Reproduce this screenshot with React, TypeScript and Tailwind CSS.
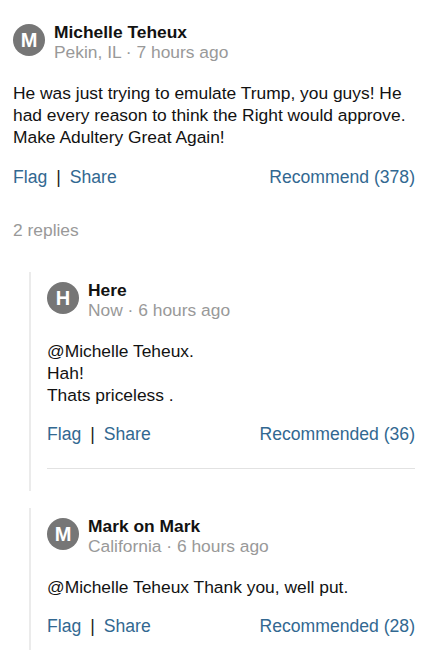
import React from "react";

type Comment = {
  initial: string;
  name: string;
  meta: string;
  body: string[];
  recommend: string;
};

const main: Comment = {
  initial: "M",
  name: "Michelle Teheux",
  meta: "Pekin, IL · 7 hours ago",
  body: [
    "He was just trying to emulate Trump, you guys! He had every reason to think the Right would approve. Make Adultery Great Again!",
  ],
  recommend: "Recommend (378)",
};

const replies: Comment[] = [
  {
    initial: "H",
    name: "Here",
    meta: "Now · 6 hours ago",
    body: ["@Michelle Teheux.", "Hah!", "Thats priceless ."],
    recommend: "Recommended (36)",
  },
  {
    initial: "M",
    name: "Mark on Mark",
    meta: "California · 6 hours ago",
    body: ["@Michelle Teheux Thank you, well put."],
    recommend: "Recommended (28)",
  },
];

function Header({ c }: { c: Comment }) {
  return (
    <div className="flex items-start gap-[9px]">
      <div className="mt-[2px] flex h-[32px] w-[32px] shrink-0 items-center justify-center rounded-full bg-[#767676] text-[20px] font-bold text-white">
        {c.initial}
      </div>
      <div className="leading-[20px]">
        <div className="font-bold text-[#121212]">{c.name}</div>
        <div className="text-[#999]">{c.meta}</div>
      </div>
    </div>
  );
}

function Actions({ label }: { label: string }) {
  return (
    <div className="flex items-center justify-between text-[17.6px] leading-[22px] text-[#326891]">
      <div className="flex items-center">
        <span>Flag</span>
        <span className="mx-[9px] text-[#222]">|</span>
        <span>Share</span>
      </div>
      <span>{label}</span>
    </div>
  );
}

export default function App() {
  return (
    <div className="min-h-screen bg-white pl-[13px] pr-[15px] pt-[22px] text-[17.4px] font-['Liberation_Sans',Arial,sans-serif] text-[#121212]">
      <Header c={main} />
      <p className="mt-[20px] leading-[22px]">{main.body[0]}</p>
      <div className="mt-[18px]">
        <Actions label={main.recommend} />
      </div>
      <div className="mt-[31px] leading-[22px] text-[#999]">2 replies</div>

      <div className="mt-[31px] flex flex-col gap-[17px] pl-[16px]">
        {replies.map((r, i) => (
          <div key={i} className="border-l-2 border-[#ebebeb] pl-[16px] pt-[8px]">
            <Header c={r} />
            <div className="mt-[20px] leading-[22px]">
              {r.body.map((line, j) => (
                <div key={j}>{line}</div>
              ))}
            </div>
            <div className="mt-[17px] pb-[23px]">
              <Actions label={r.recommend} />
            </div>
            {i < replies.length - 1 && <div className="mb-[22px] h-px bg-[#e2e2e2]" />}
          </div>
        ))}
      </div>
    </div>
  );
}
